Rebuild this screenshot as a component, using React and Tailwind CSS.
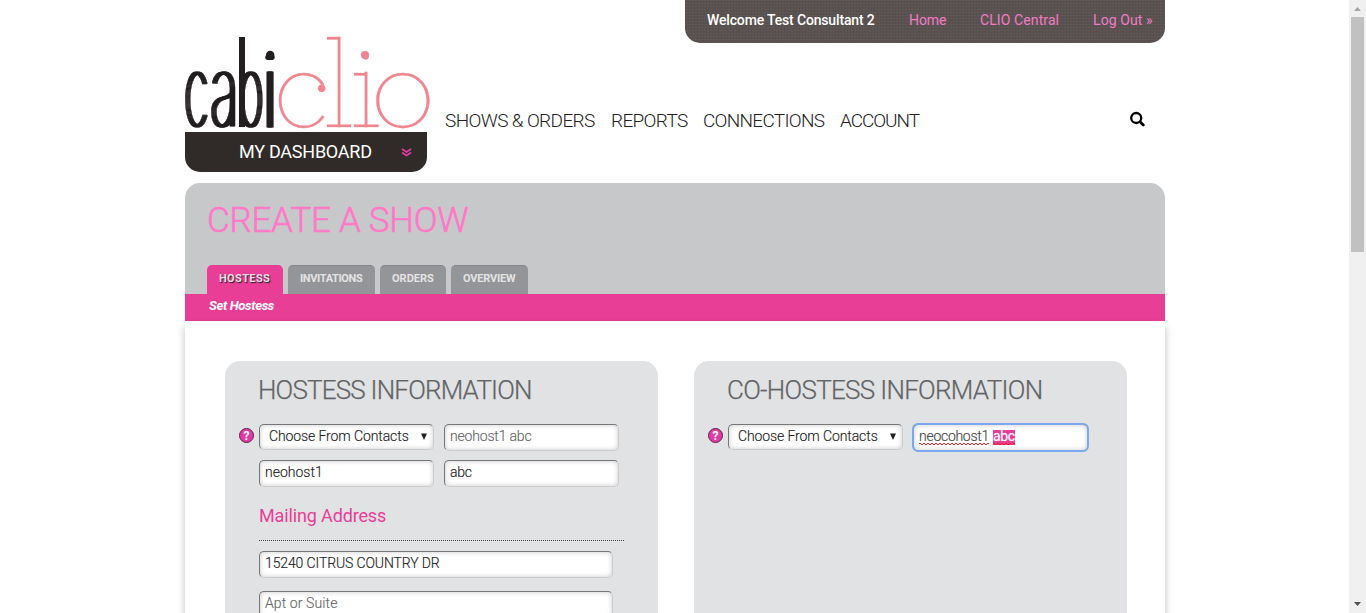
import React from "react";

function Logo() {
  return (
    <svg width="246" height="96" viewBox="0 0 246 96" className="block shrink-0 overflow-visible" role="img" aria-label="cabi clio">
      <defs>
        <filter id="widen" x="-5%" y="-5%" width="110%" height="110%" colorInterpolationFilters="sRGB">
          <feOffset in="SourceGraphic" dx="-2" dy="0" result="a" />
          <feOffset in="SourceGraphic" dx="-1" dy="0" result="b" />
          <feOffset in="SourceGraphic" dx="1" dy="0" result="c" />
          <feOffset in="SourceGraphic" dx="2" dy="0" result="d" />
          <feMerge>
            <feMergeNode in="a" />
            <feMergeNode in="b" />
            <feMergeNode in="SourceGraphic" />
            <feMergeNode in="c" />
            <feMergeNode in="d" />
          </feMerge>
        </filter>
      </defs>
      <g filter="url(#widen)" fill="#231f20" stroke="#231f20" strokeWidth="0.8" className="font-['Inter',sans-serif] font-thin text-[100px]">
        <text transform="translate(-0.6 90.2) scale(0.44 0.965)">c</text>
        <text transform="translate(25.4 90.2) scale(0.526 0.965)">a</text>
        <text transform="translate(51.9 90.2) scale(0.453 0.965)">b</text>
        <text transform="translate(74.2 91) scale(1 1)">i</text>
      </g>
      <rect x="54" y="1" width="6" height="90" fill="#231f20" />
      <circle cx="85.2" cy="19" r="4.2" fill="#231f20" />
      <g fill="#f0868f" stroke="#f0868f" strokeWidth="0.3" className="font-['Inter',sans-serif] font-thin text-[100px]">
        <text transform="translate(87.1 90.6) scale(1.1 0.975)">c</text>
        <text transform="translate(143.2 91) scale(1 1.24)">l</text>
        <text transform="translate(170.3 91) scale(1 1)">i</text>
        <text transform="translate(184 90.6) scale(1.17 0.975)">o</text>
        <circle cx="136.7" cy="52.3" r="3.6" />
        <rect x="142" y="1" width="13" height="2.500" />
        <rect x="142" y="88.700" width="24" height="2.300" />
        <rect x="169" y="37" width="13" height="2.500" />
        <rect x="169" y="88.700" width="24.500" height="2.300" />
        <circle cx="180" cy="19" r="4" />
      </g>
    </svg>
  );
}

function Tab({ children, className }) {
  return (
    <a className={`h-[29px] rounded-t-[5px] pl-3 text-[11px] font-bold whitespace-nowrap ${className}`}>
      {children}
    </a>
  );
}

const box =
  "rounded-[5px] border border-[#cccccc] border-t-[#767679] border-l-[#767679] bg-white shadow-[inset_0_0_5px_rgba(0,0,0,0.22)]";

const squiggle =
  "bg-[image:repeating-linear-gradient(90deg,#e22_0_2px,transparent_2px_4px),repeating-linear-gradient(90deg,transparent_0_2px,#e22_2px_4px)] bg-[size:100%_1px,100%_1px] bg-[position:0_13px,0_14px] bg-no-repeat";

function Field({ className, ...rest }) {
  return (
    <input
      className={`${box} block h-[27px] pl-[5px] pb-[4px] text-[14px] font-light [-webkit-text-stroke:0.15px] outline-none text-[#222] placeholder:text-[#666] ${className}`}
      {...rest}
    />
  );
}

function Help() {
  return (
    <span className="mt-1 mr-[5px] flex h-[15px] w-[15px] shrink-0 items-center justify-center rounded-full border border-[#5b2346] bg-[#e23ba6] text-[12px] font-bold leading-none text-white">
      ?
    </span>
  );
}

function ContactSelect() {
  return (
    <div className={`${box} flex h-[26px] w-[175px] shrink-0 items-start justify-between pl-[9px] pr-[6px] text-[14px] font-light leading-[23px] tracking-[-0.1px] text-[#222] [-webkit-text-stroke:0.15px]`}>
      <span className="whitespace-nowrap">Choose From Contacts</span>
      <svg width="6" height="7" viewBox="0 0 6 7" className="mt-2">
        <path d="M0 0.5h6L3 7z" fill="#222" />
      </svg>
    </div>
  );
}

function Panel({ title, className, children }) {
  return (
    <section className="h-[400px] w-[433px] shrink-0 rounded-t-[15px] bg-[#e1e2e4] pt-[14px]">
      <h2 className={`pl-[33px] text-[26px] font-light leading-[30px] whitespace-nowrap text-[#636466] [-webkit-text-stroke:0.25px] ${className}`}>{title}</h2>
      {children}
    </section>
  );
}

function Scrollbar() {
  return (
    <div className="flex h-full w-[17px] flex-col items-center bg-[#f0f0f0]">
      <svg width="17" height="17" viewBox="0 0 17 17" className="shrink-0">
        <path d="M5 11h7L8.500 7z" fill="#a3a3a3" />
      </svg>
      <div className="h-[235px] w-[13px] bg-[#c1c1c1]" />
      <svg width="17" height="17" viewBox="0 0 17 17" className="mt-auto shrink-0">
        <path d="M5 6h7L8.500 10z" fill="#505050" />
      </svg>
    </div>
  );
}

export default function App() {
  return (
    <div className="flex h-[613px] overflow-hidden bg-white font-['Roboto',sans-serif]">
      <div className="w-[1349px] pl-[185px]">
        <div className="w-[980px]">
          <header className="flex h-[172px]">
            <div className="w-[246px] pt-9">
              <Logo />
              <div className="flex h-10 w-[242px] items-start justify-between rounded-b-[15px] bg-[#302b29] pl-[54px] pr-[15px] text-[18px] leading-[39px] tracking-[-0.25px] text-white">
                <span>MY DASHBOARD</span>
                <svg width="11" height="9" viewBox="0 0 11 9" className="mt-4" fill="none" stroke="#e23ba6" strokeWidth="1.600">
                  <path d="M1 1l4.500 3L10 1M1 4.500l4.500 3L10 4.500" />
                </svg>
              </div>
            </div>
            <div className="flex w-[734px] flex-col">
              <div className="flex h-[43px] w-[480px] self-end rounded-b-[15px] bg-[#5a5251] bg-[repeating-linear-gradient(0deg,rgba(255,255,255,0.03)_0_1px,transparent_1px_3px),repeating-linear-gradient(90deg,rgba(0,0,0,0.05)_0_1px,transparent_1px_3px)] pl-[22px] text-[14px] leading-[41px] whitespace-nowrap text-[#f07cc6]">
                <span className="w-[202px] font-medium tracking-[-0.16px] text-white">Welcome Test Consultant 2</span>
                <a className="w-[71px] tracking-[-0.08px]">Home</a>
                <a className="w-[113px] tracking-[0.1px]">CLIO Central</a>
                <a className="tracking-[0.09px]">Log Out »</a>
              </div>
              <nav className="mt-[68px] flex pl-[14px] text-[19px] font-light leading-5 whitespace-nowrap text-[#222]">
                <a className="w-[166px] tracking-[-0.62px]">SHOWS &amp; ORDERS</a>
                <a className="w-[92px] tracking-[-0.66px]">REPORTS</a>
                <a className="w-[137px] tracking-[-0.72px]">CONNECTIONS</a>
                <a className="tracking-[-1.05px]">ACCOUNT</a>
                <svg width="16" height="16" viewBox="0 0 16 16" className="ml-auto mr-5" fill="none" stroke="#000">
                  <circle cx="7.200" cy="7" r="5" strokeWidth="2.300" />
                  <path d="M11 10.800L14.300 14.100" strokeWidth="2.800" strokeLinecap="round" />
                </svg>
              </nav>
            </div>
          </header>

          <div className="mt-[11px] flex h-[111px] flex-col justify-between rounded-t-[15px] bg-[#c7c8ca] pt-[18px] pl-[22px]">
            <h1 className="text-[35px] font-light leading-10 tracking-[-0.27px] text-[#ff78c8] [-webkit-text-stroke:0.6px]">CREATE A SHOW</h1>
            <div className="flex gap-[5px]">
              <Tab className="w-[76px] bg-[#e83e96] leading-[27px] tracking-[0.35px] text-[#f3dce9] [text-shadow:1px_1px_1px_#222]">HOSTESS</Tab>
              <Tab className="w-[87px] border-t border-[#85858a] bg-[#939598] leading-[25px] tracking-[-0.36px] text-[#e3e3e4]">INVITATIONS</Tab>
              <Tab className="w-[66px] border-t border-[#85858a] bg-[#939598] leading-[25px] text-[#e3e3e4]">ORDERS</Tab>
              <Tab className="w-[77px] border-t border-[#85858a] bg-[#939598] leading-[25px] tracking-[-0.2px] text-[#e3e3e4]">OVERVIEW</Tab>
            </div>
          </div>
          <div className="h-[27px] bg-[#e83e96] pl-6 text-[13px] font-bold italic leading-[24px] tracking-[-0.33px] text-white">Set Hostess</div>

          <main className="flex gap-9 pl-10 pt-10 shadow-[0_5px_8px_rgba(0,0,0,0.25)]">
            <Panel title="HOSTESS INFORMATION" className="tracking-[-0.8px]">
              <div className="mt-[19px] flex items-start pl-[14px]">
                <Help />
                <ContactSelect />
                <Field className="ml-[10px] w-[175px] tracking-[-0.18px]" placeholder="neohost1 abc" />
              </div>
              <div className="mt-[9px] flex gap-[10px] pl-[34px]">
                <Field className="w-[175px]" defaultValue="neohost1" />
                <Field className="w-[175px] tracking-[-0.3px]" defaultValue="abc" />
              </div>
              <div className="pl-[34px]">
                <h3 className="mt-[17px] text-[18px] leading-6 tracking-[-0.14px] text-[#e83e96]">Mailing Address</h3>
                <div className="mt-3 h-px w-[365px] bg-[repeating-linear-gradient(90deg,#444_0_1px,transparent_1px_2px)]" />
                <Field className="mt-[10px] w-[354px] tracking-[-0.12px]" defaultValue="15240 CITRUS COUNTRY DR" />
                <Field className="mt-[13px] w-[354px] tracking-[0.1px]" placeholder="Apt or Suite" />
              </div>
            </Panel>
            <Panel title="CO-HOSTESS INFORMATION" className="tracking-[-0.7px]">
              <div className="mt-[19px] flex items-start pl-[14px]">
                <Help />
                <ContactSelect />
                <div className={`${box} ml-[10px] flex h-[27px] w-[175px] gap-1 pl-[5px] pt-[5px] text-[14px] font-light leading-[13px] tracking-[-0.28px] whitespace-nowrap text-[#444] outline-2 -outline-offset-1 outline-[#7aa7f0] [-webkit-text-stroke:0.15px]`}>
                  <span className={`h-[15px] ${squiggle}`}>neocohost1</span>
                  <span className={`h-[15px] bg-[#e83e96] font-normal tracking-[-0.4px] text-white ${squiggle}`}>abc</span>
                </div>
              </div>
            </Panel>
          </main>
        </div>
      </div>
      <Scrollbar />
    </div>
  );
}
